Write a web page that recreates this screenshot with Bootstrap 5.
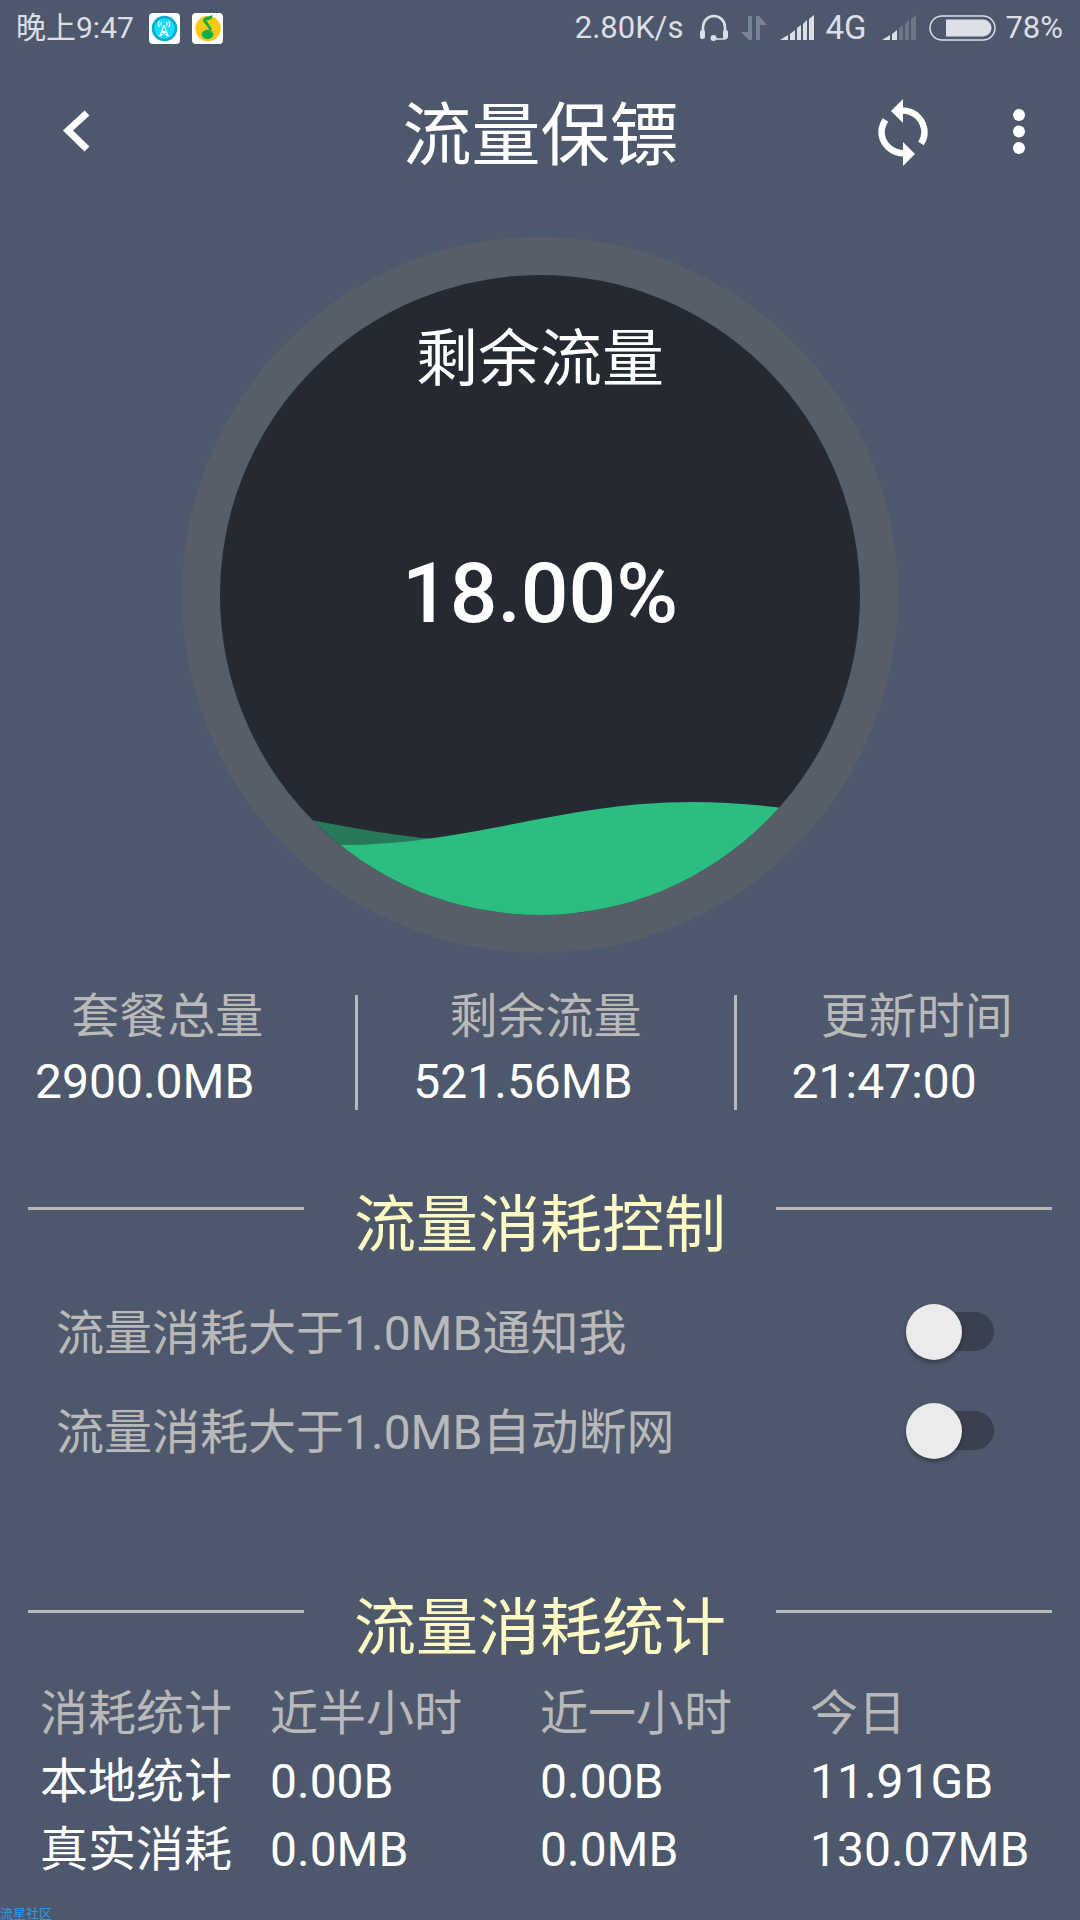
<!DOCTYPE html>
<html lang="zh-CN">
<head>
<meta charset="utf-8">
<meta name="viewport" content="width=device-width, initial-scale=1">
<title>流量保镖</title>
<link rel="stylesheet" href="https://cdn.jsdelivr.net/npm/bootstrap@5.3.0/dist/css/bootstrap.min.css">
<style>
  body {
    background: #4d586c;
    color: #fff;
    font-family: Roboto, "Noto Sans CJK SC", sans-serif;
    font-size: 48px;
    line-height: 66px;
  }
  .screen { min-height: 100vh; }
  svg { display: block; flex: none; }
  .muted-text { color: #b9b9b9; }

  .status-bar { height: 56px; padding: 0 17px 0 16px; color: #dcdfe5; font-size: 31px; line-height: 56px; }
  .status-clock { margin-right: 15px; font-size: 30px; }
  .status-net { margin: 0 16px 0 11px; font-size: 33px; }

  .app-bar { height: 152px; padding: 0 39px 0 40px; }
  .app-title { font-size: 69px; line-height: 92px; font-weight: 400; padding-top: 10px; }
  .app-side { flex: 1 1 0; }
  .icon-btn { border: 0; background: none; padding: 0; color: #fff; }

  .gauge {
    width: 716px; height: 716px; max-width: 100%;
    margin: 29px auto 0;
    border: 38px solid #585e68;
    border-radius: 50%;
    background: #252931;
    overflow: hidden;
  }
  .gauge-wave { left: 0; top: 0; width: 100%; height: 100%; }
  .gauge-label { font-size: 62px; line-height: 84px; padding-top: 43px; }
  .gauge-value { font-size: 84px; line-height: 104px; font-weight: 500; margin-top: 140px; }

  .stats { padding: 29px 38px 0 35px; }
  .stat-item { flex: 19 1 0; }
  .stat-item:last-child { flex-grow: 18; }
  .stat-name { padding-top: 3px; line-height: 64px; }
  .stat-rule { width: 3px; height: 115px; margin: 13px 55px 0 56px; background: #b9b9b9; }

  .section-head { padding: 0 28px; margin-top: 65px; }
  .section-head h2 { font-size: 62px; line-height: 92px; font-weight: 400; color: #fff9c4; margin: 0 50px; }
  .section-rule { flex: 1 1 0; height: 3px; margin-top: 27px; background: #b9b9b9; }

  .options { padding-top: 10px; }
  .option-row { height: 99px; padding: 0 86px 0 56px; }
  .option-row label { padding-top: 5px; }
  .option-switch {
    appearance: none;
    position: relative;
    flex: none;
    width: 80px; height: 39px;
    margin: 0;
    border: 0; border-radius: 20px;
    background: #3a4050;
  }
  .option-switch::before {
    content: "";
    position: absolute;
    left: -8px; top: -8px;
    width: 56px; height: 56px;
    border-radius: 50%;
    background: #ebebeb;
    box-shadow: 0 3px 4px rgba(0, 0, 0, .3);
  }
  .option-switch:checked::before { left: 32px; }

  .section-head.stats-head { margin-top: 103px; }
  .usage { table-layout: fixed; width: 100%; margin-top: 5px; }
  .usage th, .usage td { font-weight: 400; padding: 0; height: 68px; text-align: left; white-space: nowrap; }
  .usage th:first-child { padding-left: 40px; }

  .source-tag { color: #3399e6; font-size: 13px; line-height: 12px; }
</style>
</head>
<body>
<div class="screen d-flex flex-column">

  <div class="status-bar d-flex align-items-center justify-content-between">
    <div class="d-flex align-items-center">
      <span class="status-clock">晚上9:47</span>
      <svg width="31" height="31" viewBox="0 0 31 31" style="margin-right:12px">
        <rect width="31" height="31" rx="4" fill="#fff"/>
        <circle cx="15.500" cy="15.500" r="11.500" fill="#18dcff" stroke="#06aacb" stroke-width="2.500"/>
        <path d="M15 12 11 23M15 12l4 11M12.500 18.500h5.500M12 22l5.500-3.500M18 22l-5.500-3.500M9.500 22.800h3M17.500 22.800h3M12.500 9q-1.500 2 0 4M17.500 9q1.500 2 0 4M10.500 8q-2 3 0 6M19.800 8q2 3 0 6" fill="none" stroke="#fff" stroke-width="1.100"/>
      </svg>
      <svg width="31" height="31" viewBox="0 0 31 31">
        <rect width="31" height="31" rx="4" fill="#fff"/>
        <circle cx="16" cy="15.500" r="12.700" fill="#fbc916"/>
        <path d="M11 8q0-4 5-4.500 3 0 4-2 1 4-2 5.300-2 .7-3.500.8L20 16l-1.500 2z" fill="#0fae4a"/>
        <ellipse cx="15.500" cy="21.500" rx="5.800" ry="4.700" fill="#0fae4a"/>
      </svg>
    </div>
    <div class="d-flex align-items-center">
      <span>2.80K/s</span>
      <svg class="ms-3" width="30" height="30" viewBox="0 0 30 30">
        <path d="M4 19V14a11 11 0 0 1 22 0v5" fill="none" stroke="#dcdfe5" stroke-width="2.600"/>
        <rect x="1" y="17" width="5" height="9" rx="2" fill="#dcdfe5"/><rect x="24" y="17" width="5" height="9" rx="2" fill="#dcdfe5"/>
        <path d="M26 24v2H15" fill="none" stroke="#dcdfe5" stroke-width="1.500"/><circle cx="14.500" cy="25" r="3" fill="#dcdfe5"/>
      </svg>
      <svg width="26" height="26" viewBox="0 0 26 26" style="margin:0 13px 0 12px">
        <path d="M7 1h4v24H8L0 17h7zM15 25h4V10h7L18 1h-3z" fill="#788596"/>
      </svg>
      <svg width="34" height="26" viewBox="0 0 34 26" fill="#dcdfe5">
        <path d="M0 25 8 20v5zM10 19l5-4v10h-5zM17 13l4-3v15h-4zM23 9l4-4v20h-4zM29 4l5-4v25h-5z"/>
      </svg>
      <span class="status-net">4G</span>
      <svg width="34" height="26" viewBox="0 0 34 26">
        <path d="M0 25 8 20v5zM10 19l5-4v10h-5z" fill="#dcdfe5"/>
        <path d="M17 13l4-3v15h-4zM23 9l4-4v20h-4zM29 4l5-4v25h-5z" fill="#6c778a"/>
      </svg>
      <svg width="67" height="26" viewBox="0 0 67 26" style="margin:0 9px 0 13px">
        <rect x="1" y="1" width="65" height="24" rx="12" fill="none" stroke="#dcdfe5" stroke-width="1.500"/>
        <path d="M17 4.500h37a8.500 8.500 0 0 1 0 17H17z" fill="#dcdfe5"/>
      </svg>
      <span>78%</span>
    </div>
  </div>

  <header class="app-bar d-flex align-items-center">
    <div class="app-side d-flex">
      <button type="button" class="icon-btn" aria-label="返回">
        <svg width="72" height="72" viewBox="0 0 72 72"><path d="M47 17 28 34.500 47 53" fill="none" stroke="#fff" stroke-width="7"/></svg>
      </button>
    </div>
    <h1 class="app-title m-0">流量保镖</h1>
    <div class="app-side d-flex justify-content-end">
      <button type="button" class="icon-btn" aria-label="刷新">
        <svg width="52" height="72" viewBox="0 0 52 72">
          <path d="M24 14.500c14 0 22.500 11 22.500 22 0 4-1.500 8-3.500 11" fill="none" stroke="#fff" stroke-width="6.500"/>
          <path d="M13 15 25 3v24z" fill="#fff"/>
          <path d="M27 57.500C13 57.500 3.500 47 3.500 36c0-5 1.500-8 4-12" fill="none" stroke="#fff" stroke-width="6.500"/>
          <path d="M37 58 25 70V46z" fill="#fff"/>
        </svg>
      </button>
      <button type="button" class="icon-btn" aria-label="更多" style="margin-left:67px">
        <svg width="44" height="72" viewBox="0 0 44 72" fill="#fff"><circle cx="22" cy="19" r="6"/><circle cx="22" cy="35.500" r="6"/><circle cx="22" cy="52" r="6"/></svg>
      </button>
    </div>
  </header>

  <main class="flex-grow-1">
    <section class="gauge position-relative text-center">
      <svg class="gauge-wave position-absolute" viewBox="220 275 640 640">
        <path d="M210 803C250 808 300 818 360 829 400 836 440 841 480 841V925H210z" fill="#28785a"/>
        <path d="M200 830Q270 845 341 845C468 845 564 802 691 802 750 802 800 809 880 824V925H200z" fill="#2cbe80"/>
      </svg>
      <div class="position-relative">
        <div class="gauge-label">剩余流量</div>
        <div class="gauge-value">18.00%</div>
      </div>
    </section>

    <section class="stats d-flex">
      <div class="stat-item"><div class="stat-name muted-text text-center">套餐总量</div><div>2900.0MB</div></div>
      <div class="stat-rule"></div>
      <div class="stat-item"><div class="stat-name muted-text text-center">剩余流量</div><div>521.56MB</div></div>
      <div class="stat-rule"></div>
      <div class="stat-item"><div class="stat-name muted-text text-center">更新时间</div><div>21:47:00</div></div>
    </section>

    <div class="section-head d-flex"><span class="section-rule"></span><h2>流量消耗控制</h2><span class="section-rule"></span></div>
    <div class="options muted-text">
      <div class="option-row d-flex align-items-center justify-content-between">
        <label for="notify">流量消耗大于1.0MB通知我</label>
        <input class="option-switch" type="checkbox" role="switch" id="notify">
      </div>
      <div class="option-row d-flex align-items-center justify-content-between">
        <label for="cutoff">流量消耗大于1.0MB自动断网</label>
        <input class="option-switch" type="checkbox" role="switch" id="cutoff">
      </div>
    </div>

    <div class="section-head stats-head d-flex"><span class="section-rule"></span><h2>流量消耗统计</h2><span class="section-rule"></span></div>
    <table class="usage">
      <thead class="muted-text"><tr><th scope="col">消耗统计</th><th scope="col">近半小时</th><th scope="col">近一小时</th><th scope="col">今日</th></tr></thead>
      <tbody>
        <tr><th scope="row">本地统计</th><td>0.00B</td><td>0.00B</td><td>11.91GB</td></tr>
        <tr><th scope="row">真实消耗</th><td>0.0MB</td><td>0.0MB</td><td>130.07MB</td></tr>
      </tbody>
    </table>
  </main>

  <footer class="source-tag">流星社区</footer>
</div>
<script src="https://cdn.jsdelivr.net/npm/bootstrap@5.3.0/dist/js/bootstrap.bundle.min.js"></script>
</body>
</html>
